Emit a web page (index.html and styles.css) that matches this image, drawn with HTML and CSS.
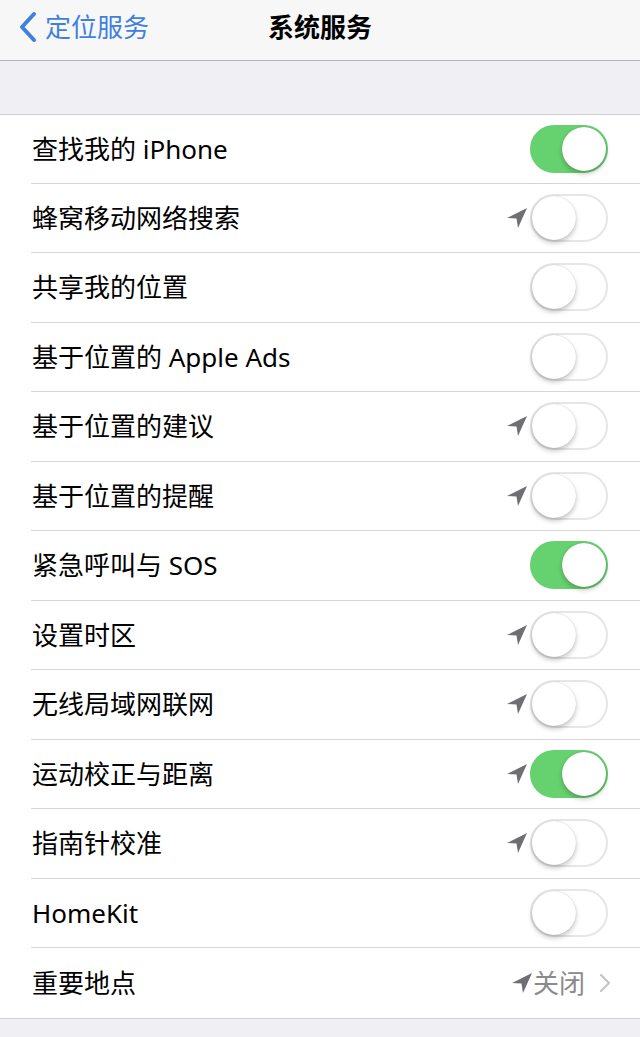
FILE: index.html
```html
<!DOCTYPE html>
<html lang="zh-CN">
<head>
  <meta charset="UTF-8">
  <meta name="viewport" content="width=device-width, initial-scale=1.0">
  <title>系统服务</title>
  <link rel="stylesheet" href="styles.css">
</head>
<body>
  <header class="nav">
    <a class="nav-back" href="#">
      <svg class="back-chevron" viewBox="0 0 20 32" width="20" height="32">
        <path d="M16 3 L4 16 L16 29" fill="none" stroke="currentColor" stroke-width="4" stroke-linecap="round" stroke-linejoin="round"/>
      </svg>
      <span>定位服务</span>
    </a>
    <h1 class="nav-title">系统服务</h1>
  </header>

  <div class="spacer"></div>

  <ul class="list">
    <li class="row"><span class="label">查找我的 iPhone</span><span class="accessory"><span class="switch on"></span></span></li>
    <li class="row"><span class="label">蜂窝移动网络搜索</span><span class="accessory"><svg class="loc" viewBox="0 0 22 22"><path d="M21 1 L1 11 L10.5 11.5 L12 21 Z"/></svg><span class="switch"></span></span></li>
    <li class="row"><span class="label">共享我的位置</span><span class="accessory"><span class="switch"></span></span></li>
    <li class="row"><span class="label">基于位置的 Apple Ads</span><span class="accessory"><span class="switch"></span></span></li>
    <li class="row"><span class="label">基于位置的建议</span><span class="accessory"><svg class="loc" viewBox="0 0 22 22"><path d="M21 1 L1 11 L10.5 11.5 L12 21 Z"/></svg><span class="switch"></span></span></li>
    <li class="row"><span class="label">基于位置的提醒</span><span class="accessory"><svg class="loc" viewBox="0 0 22 22"><path d="M21 1 L1 11 L10.5 11.5 L12 21 Z"/></svg><span class="switch"></span></span></li>
    <li class="row"><span class="label">紧急呼叫与 SOS</span><span class="accessory"><span class="switch on"></span></span></li>
    <li class="row"><span class="label">设置时区</span><span class="accessory"><svg class="loc" viewBox="0 0 22 22"><path d="M21 1 L1 11 L10.5 11.5 L12 21 Z"/></svg><span class="switch"></span></span></li>
    <li class="row"><span class="label">无线局域网联网</span><span class="accessory"><svg class="loc" viewBox="0 0 22 22"><path d="M21 1 L1 11 L10.5 11.5 L12 21 Z"/></svg><span class="switch"></span></span></li>
    <li class="row"><span class="label">运动校正与距离</span><span class="accessory"><svg class="loc" viewBox="0 0 22 22"><path d="M21 1 L1 11 L10.5 11.5 L12 21 Z"/></svg><span class="switch on"></span></span></li>
    <li class="row"><span class="label">指南针校准</span><span class="accessory"><svg class="loc" viewBox="0 0 22 22"><path d="M21 1 L1 11 L10.5 11.5 L12 21 Z"/></svg><span class="switch"></span></span></li>
    <li class="row"><span class="label">HomeKit</span><span class="accessory"><span class="switch"></span></span></li>
    <li class="row last">
      <span class="label">重要地点</span>
      <span class="accessory detail">
        <svg class="loc" viewBox="0 0 22 22"><path d="M21 1 L1 11 L10.5 11.5 L12 21 Z"/></svg>
        <span class="value">关闭</span>
        <svg class="chevron" viewBox="0 0 12 20" width="12" height="20">
          <path d="M2 2 L10 10 L2 18" fill="none" stroke="currentColor" stroke-width="2.2" stroke-linecap="round" stroke-linejoin="round"/>
        </svg>
      </span>
    </li>
  </ul>
</body>
</html>
```

FILE: styles.css
```css
body {
  margin: 0;
  background-color: #efeff4;
  font-family: "Noto Sans", "Noto Sans CJK SC", sans-serif;
  color: #000;
}

.nav {
  height: 60px;
  background-color: #f7f7f8;
  border-bottom: 1px solid #b7b7ba;
  display: flex;
  align-items: center;
  justify-content: center;
  position: relative;
}

.nav-back {
  position: absolute;
  left: 18px;
  top: 10px;
  display: flex;
  align-items: center;
  gap: 7px;
  color: #3f7fde;
  text-decoration: none;
  font-size: 26px;
  line-height: 34px;
}

.back-chevron {
  display: block;
}

.nav-title {
  margin: 0;
  font-size: 26px;
  font-weight: 600;
  line-height: 34px;
  margin-top: -6px;
}

.spacer {
  height: 53px;
}

.list {
  list-style: none;
  margin: 0;
  padding: 0;
  background-color: #fff;
  border-top: 1px solid #cfcfd2;
  border-bottom: 1px solid #cfcfd2;
}

.row {
  height: 69.5px;
  box-sizing: border-box;
  margin-left: 31px;
  padding-right: 32px;
  border-bottom: 1px solid #d6d6d9;
  display: flex;
  align-items: center;
  justify-content: space-between;
}

.row:first-child {
  height: 68.5px;
}

.row.last {
  border-bottom: none;
}

.label {
  font-size: 26px;
  line-height: 32px;
  padding-left: 1px;
}

.accessory {
  display: flex;
  align-items: center;
  gap: 2px;
}

.loc {
  width: 22px;
  height: 22px;
  fill: #6f6f73;
}

.switch {
  width: 78px;
  height: 48px;
  box-sizing: border-box;
  border-radius: 24px;
  border: 2px solid #e6e6e8;
  background-color: #fff;
  position: relative;
}

.switch::after {
  content: "";
  position: absolute;
  top: 0;
  left: 0;
  width: 44px;
  height: 44px;
  border-radius: 50%;
  background-color: #fff;
  box-shadow: 0 3px 5px rgba(0, 0, 0, 0.22), 0 0 1px rgba(0, 0, 0, 0.25);
}

.switch.on {
  background-color: #66d16f;
  border-color: #66d16f;
}

.switch.on::after {
  left: 30px;
}

.detail {
  gap: 0;
  margin-right: -3px;
}

.value {
  font-size: 26px;
  color: #8a8a8e;
  line-height: 32px;
  margin-right: 14px;
}

.chevron {
  color: #c4c4c8;
}
```
